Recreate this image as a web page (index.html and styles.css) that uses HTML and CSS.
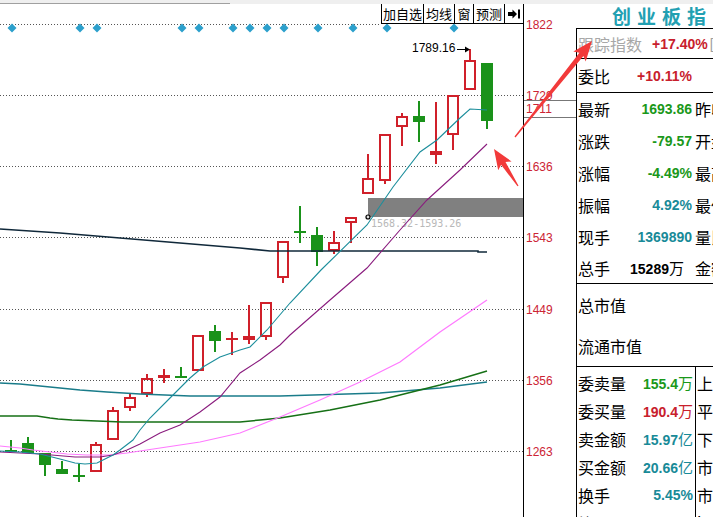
FILE: index.html
```html
<!DOCTYPE html>
<html lang="zh">
<head>
<meta charset="utf-8">
<title>创业板指</title>
<link rel="stylesheet" href="styles.css">
</head>
<body>
<div class="top"><div class="top-tab"></div></div>
<div class="main">
  <div class="chart">
    <svg class="kline" width="576" height="513" viewBox="0 4 576 513">
      <g class="grid">
        <line x1="0" y1="24.5" x2="381" y2="24.5"/>
        <line x1="0" y1="95.5" x2="523" y2="95.5"/>
        <line x1="0" y1="166.5" x2="523" y2="166.5"/>
        <line x1="0" y1="237.5" x2="523" y2="237.5"/>
        <line x1="0" y1="309.5" x2="523" y2="309.5"/>
        <line x1="0" y1="380.5" x2="523" y2="380.5"/>
        <line x1="0" y1="451.5" x2="523" y2="451.5"/>
      </g>
      <g class="dia">
        <polygon points="12,23.5 16.5,28 12,32.5 7.5,28"/>
        <polygon points="80,23.5 84.5,28 80,32.5 75.5,28"/>
        <polygon points="97,23.5 101.5,28 97,32.5 92.5,28"/>
        <polygon points="182,23.5 186.5,28 182,32.5 177.5,28"/>
        <polygon points="199,23.5 203.5,28 199,32.5 194.5,28"/>
        <polygon points="233,23.5 237.5,28 233,32.5 228.5,28"/>
        <polygon points="250,23.5 254.5,28 250,32.5 245.5,28"/>
        <polygon points="267,23.5 271.5,28 267,32.5 262.5,28"/>
        <polygon points="284,23.5 288.5,28 284,32.5 279.5,28"/>
        <polygon points="318,23.5 322.5,28 318,32.5 313.5,28"/>
        <polygon points="353,23.5 357.5,28 353,32.5 348.5,28"/>
        <polygon points="387,23.5 391.5,28 387,32.5 382.5,28"/>
        <polygon points="454,23.5 458.5,28 454,32.5 449.5,28"/>
      </g>
      <rect class="band" x="368" y="198" width="155" height="19"/>
      <text class="bandlbl" x="371" y="227">1568.32-1593.26</text>
      <circle class="dot" cx="368" cy="217" r="2"/>
      <g>
        <line class="gw" x1="487" y1="63" x2="487" y2="129"/><rect class="gb" x="481" y="63" width="12" height="58"/>
        <line class="rw" x1="470" y1="49" x2="470" y2="60"/><rect class="rb" x="465" y="61" width="10" height="28"/>
        <rect class="rb" x="448" y="96" width="10" height="38"/><line class="rw" x1="453" y1="135" x2="453" y2="150"/>
        <line class="rw" x1="436" y1="102" x2="436" y2="151"/><rect class="rb" x="431" y="152" width="10" height="2"/><line class="rw" x1="436" y1="155" x2="436" y2="164"/>
        <line class="gw" x1="419" y1="101" x2="419" y2="142"/><rect class="gb" x="413" y="116" width="12" height="6"/>
        <line class="rw" x1="402" y1="113" x2="402" y2="116"/><rect class="rb" x="397" y="117" width="10" height="9"/><line class="rw" x1="402" y1="127" x2="402" y2="146"/>
        <rect class="rb" x="380" y="135" width="10" height="45"/><line class="rw" x1="385" y1="181" x2="385" y2="184"/>
        <line class="rw" x1="368" y1="154" x2="368" y2="178"/><rect class="rb" x="363" y="179" width="10" height="14"/>
        <rect class="rb" x="346" y="218" width="10" height="4"/><line class="rw" x1="351" y1="223" x2="351" y2="243"/>
        <line class="rw" x1="334" y1="231" x2="334" y2="242"/><rect class="rb" x="329" y="243" width="10" height="7"/><line class="rw" x1="334" y1="251" x2="334" y2="254"/>
        <line class="gw" x1="317" y1="227" x2="317" y2="266"/><rect class="gb" x="311" y="235" width="12" height="17"/>
        <line class="gw" x1="300" y1="206" x2="300" y2="243"/><rect class="gb" x="294" y="231" width="12" height="2"/>
        <rect class="rb" x="278" y="242" width="10" height="35"/><line class="rw" x1="283" y1="278" x2="283" y2="283"/>
        <rect class="rb" x="261" y="303" width="10" height="33"/><line class="rw" x1="266" y1="337" x2="266" y2="340"/>
        <line class="rw" x1="249" y1="305" x2="249" y2="336"/><rect class="rb" x="244" y="337" width="10" height="2"/><line class="rw" x1="249" y1="340" x2="249" y2="344"/>
        <line class="rw" x1="232" y1="332" x2="232" y2="355"/><rect class="rf" x="226" y="338" width="12" height="2"/>
        <line class="gw" x1="215" y1="325" x2="215" y2="352"/><rect class="gb" x="209" y="331" width="12" height="10"/>
        <rect class="rb" x="193" y="336" width="10" height="34"/>
        <line class="gw" x1="181" y1="367" x2="181" y2="378"/><rect class="gb" x="175" y="376" width="12" height="2"/>
        <line class="rw" x1="164" y1="369" x2="164" y2="375"/><rect class="rb" x="159" y="376" width="10" height="1"/><line class="rw" x1="164" y1="378" x2="164" y2="383"/>
        <line class="rw" x1="147" y1="374" x2="147" y2="378"/><rect class="rb" x="142" y="379" width="10" height="14"/><line class="rw" x1="147" y1="394" x2="147" y2="397"/>
        <line class="rw" x1="130" y1="393" x2="130" y2="397"/><rect class="rb" x="125" y="398" width="10" height="9"/><line class="rw" x1="130" y1="408" x2="130" y2="411"/>
        <line class="rw" x1="113" y1="407" x2="113" y2="410"/><rect class="rb" x="108" y="411" width="10" height="28"/>
        <line class="rw" x1="96" y1="442" x2="96" y2="444"/><rect class="rb" x="91" y="445" width="10" height="26"/>
        <line class="gw" x1="79" y1="464" x2="79" y2="482"/><rect class="gb" x="73" y="475" width="12" height="2"/>
        <line class="gw" x1="62" y1="461" x2="62" y2="469"/><rect class="gb" x="56" y="469" width="12" height="5"/>
        <rect class="gb" x="39" y="453" width="12" height="12"/><line class="gw" x1="45" y1="465" x2="45" y2="476"/>
        <line class="gw" x1="28" y1="437" x2="28" y2="443"/><rect class="gb" x="22" y="443" width="12" height="10"/>
        <line class="gw" x1="11" y1="440" x2="11" y2="452"/><rect class="gb" x="5" y="450" width="12" height="2"/>
        <rect class="rb" x="-11" y="450" width="10" height="7"/>
      </g>
      <g class="ma">
        <polyline class="ma-navy" points="0,229 60,233 120,238 180,243 240,248 270,251 478,251 478,252 487,252"/>
        <polyline class="ma-teal2" points="0,383 20,384 40,386 60,388 80,390 107,392 140,394 190,396 280,396 380,393 440,388 487,382"/>
        <polyline class="ma-green" points="0,416 37,416 50,418 58,419 72,420 97,421 122,422 240,422 260,420 280,418 330,410 380,400 440,385 487,371"/>
        <polyline class="ma-pink" points="0,446 20,448 33,450 50,452 67,454 87,455 110,455 127,453 140,451 200,442 240,433 280,417 320,400 360,382 400,362 440,332 487,300"/>
        <polyline class="ma-purple" points="0,452 40,454 75,457 100,457 113,455 127,450 140,444 160,433 180,425 200,412 220,397 240,373 260,360 280,345 290,335 330,300 367,268 400,230 427,200 460,170 487,144"/>
        <polyline class="ma-teal" points="0,451 20,452 40,454 60,459 75,463 85,464 97,463 105,459 113,455 120,450 133,440 140,430 150,418 170,398 190,378 203,367 220,357 240,350 250,347 267,330 290,303 321,270 367,225 393,187 420,152 437,140 460,118 470,109 487,110"/>
      </g>
      <text class="hi" x="412" y="52">1789.16</text>
      <line class="hiarrow" x1="457" y1="49.5" x2="466" y2="49.5"/>
      <polygon class="hihead" points="465,46.5 470,49.5 465,52.5"/>
      <line class="axis" x1="523.5" y1="4" x2="523.5" y2="517"/>
      <line class="axbox" x1="524" y1="100.5" x2="576" y2="100.5"/>
      <line class="axbox" x1="524" y1="117.5" x2="576" y2="117.5"/>
      <g class="ax">
        <text x="526" y="29">1822</text>
        <text x="526" y="100">1729</text>
        <text x="526" y="113">1711</text>
        <text x="526" y="171">1636</text>
        <text x="526" y="242">1543</text>
        <text x="526" y="314">1449</text>
        <text x="526" y="385">1356</text>
        <text x="526" y="456">1263</text>
      </g>
    </svg>
    <div class="toolbar">
      <span class="tb tb-w42">加自选</span>
      <span class="tb tb-w31">均线</span>
      <span class="tb tb-w19">窗</span>
      <span class="tb tb-w31">预测</span>
      <span class="tb tb-w19"><svg width="12" height="10" viewBox="0 0 12 10"><path d="M0 3h4.5V0.5L9 5l-4.5 4.5V7H0z" fill="#000"/><rect x="10" y="0.5" width="2" height="9" fill="#000"/></svg></span>
    </div>
  </div>
  <aside class="panel">
    <div class="ptitle">创业板指 399006</div>
    <div class="box">
      <div class="r1"><span class="lab gray">跟踪指数</span><span class="v red r1v">+17.40%</span><span class="gray2">[3</span></div>
      <div class="r2"><div class="cell"><span class="lab">委比</span><span class="v red">+10.11%</span></div></div>
      <div class="sec1">
        <div class="row"><div class="cell"><span class="lab">最新</span><span class="v green">1693.86</span></div><span class="ext">昨收</span></div>
        <div class="row"><div class="cell"><span class="lab">涨跌</span><span class="v green">-79.57</span></div><span class="ext">开盘</span></div>
        <div class="row"><div class="cell"><span class="lab">涨幅</span><span class="v green">-4.49%</span></div><span class="ext">最高</span></div>
        <div class="row"><div class="cell"><span class="lab">振幅</span><span class="v teal">4.92%</span></div><span class="ext">最低</span></div>
        <div class="row"><div class="cell"><span class="lab">现手</span><span class="v teal">1369890</span></div><span class="ext">量比</span></div>
        <div class="row row-last"><div class="cell"><span class="lab">总手</span><span class="v black pr8">15289<span class="u">万</span></span></div><span class="ext">金额</span></div>
      </div>
      <div class="sec2">
        <div class="mrow">总市值</div>
        <div class="mrow">流通市值</div>
      </div>
      <div class="sec3">
        <div class="lrow lrow-first"><div class="cell2"><span class="lab">委卖量</span><span class="v green">155.4<span class="u">万</span></span></div><span class="ext2">上涨</span></div>
        <div class="lrow"><div class="cell2"><span class="lab">委买量</span><span class="v red">190.4<span class="u">万</span></span></div><span class="ext2">平盘</span></div>
        <div class="lrow"><div class="cell2"><span class="lab">卖金额</span><span class="v teal">15.97<span class="u">亿</span></span></div><span class="ext2">下跌</span></div>
        <div class="lrow"><div class="cell2"><span class="lab">买金额</span><span class="v teal">20.66<span class="u">亿</span></span></div><span class="ext2">市盈</span></div>
        <div class="lrow"><div class="cell2"><span class="lab">换手</span><span class="v teal">5.45%</span></div><span class="ext2">市净</span></div>
        <div class="lrow"><div class="cell2"><span class="lab">均价</span><span class="v teal"></span></div><span class="ext2">'</span></div>
      </div>
    </div>
  </aside>
</div>
<svg class="arrows" width="713" height="517" viewBox="0 0 713 517">
  <polygon points="515.5,137.4 583.4,55.9 585.7,61.6 592,41 573.3,51.6 579.4,52.7 514.5,136.6"/>
  <polygon points="518.5,185.7 505.5,161.9 511.6,161.5 494,149 498.2,170.2 501.1,164.7 517.5,186.3"/>
</svg>
</body>
</html>
```
FILE: styles.css
```css
html, body {
  margin: 0;
  padding: 0;
  background: #fff;
}
body {
  width: 713px;
  height: 517px;
  overflow: hidden;
  position: relative;
  font-family: "Noto Sans CJK SC", "Liberation Sans", sans-serif;
  color: #000;
}
.top {
  height: 4px;
  background: #efefef;
}
.top-tab {
  width: 230px;
  height: 3px;
  border-bottom: 1px solid #a0a0a0;
}
.main {
  display: flex;
  height: 513px;
}
.chart {
  position: relative;
  width: 576px;
  flex: none;
  height: 513px;
}
.kline {
  display: block;
}
.grid line {
  stroke: #555;
  stroke-width: 1;
  stroke-dasharray: 1 2;
}
.dia polygon {
  fill: #2ca0cc;
}
.band {
  fill: #808080;
}
.bandlbl {
  font-family: "DejaVu Sans Mono", "Liberation Mono", monospace;
  font-size: 10px;
  fill: #b8b8b8;
}
.dot {
  fill: #ddd;
  stroke: #000;
  stroke-width: 1.2;
}
.rw {
  stroke: #d0202a;
  stroke-width: 2;
}
.rb {
  fill: none;
  stroke: #d0202a;
  stroke-width: 2;
}
.rf {
  fill: #d0202a;
}
.gw {
  stroke: #1a921a;
  stroke-width: 2;
}
.gb {
  fill: #1a921a;
}
.ma polyline {
  fill: none;
}
.ma-navy { stroke: #10283a; stroke-width: 1.6; }
.ma-teal2 { stroke: #1a7c8a; stroke-width: 1.5; }
.ma-green { stroke: #167016; stroke-width: 1.5; }
.ma-pink { stroke: #ff7aff; stroke-width: 1.2; }
.ma-purple { stroke: #8a1c7e; stroke-width: 1.1; }
.ma-teal { stroke: #1c8e9c; stroke-width: 1.1; }
.hi {
  font-family: "Liberation Sans", sans-serif;
  font-size: 12px;
  fill: #000;
}
.hiarrow {
  stroke: #000;
  stroke-width: 1;
}
.hihead {
  fill: #000;
}
.axis {
  stroke: #000;
  stroke-width: 1;
}
.axbox {
  stroke: #777;
  stroke-width: 1;
}
.ax text {
  font-family: "Liberation Sans", sans-serif;
  font-size: 12px;
  fill: #cc2434;
}
.toolbar {
  position: absolute;
  top: 0;
  left: 381px;
  display: flex;
  height: 20px;
  background: #fff;
}
.tb {
  box-sizing: border-box;
  height: 20px;
  border-left: 1px solid #000;
  border-bottom: 1px solid #000;
  display: flex;
  align-items: center;
  justify-content: center;
  font-size: 13px;
  line-height: 1;
  white-space: nowrap;
  color: #000;
}
.tb-w42 { width: 42px; }
.tb-w31 { width: 31px; }
.tb-w19 { width: 19px; }
.panel {
  width: 137px;
  flex: none;
  overflow: hidden;
}
.ptitle {
  height: 24px;
  line-height: 24px;
  padding-left: 36px;
  font-size: 19px;
  font-weight: bold;
  letter-spacing: 6px;
  color: #22a0b2;
  white-space: nowrap;
}
.box {
  border-left: 1px solid #000;
  border-top: 1px solid #000;
  width: 200px;
}
.lab {
  font-size: 16px;
  line-height: 1;
  white-space: nowrap;
}
.v {
  font-family: "Liberation Sans", sans-serif;
  font-weight: bold;
  font-size: 14px;
  line-height: 1;
  white-space: nowrap;
}
.u {
  font-family: "Noto Sans CJK SC", sans-serif;
  font-weight: normal;
  font-size: 15px;
}
.red { color: #c8202c; }
.green { color: #1a981a; }
.teal { color: #188a98; }
.black { color: #000; }
.gray { color: #a8a8a8; }
.gray2 {
  color: #a0a0a0;
  font-family: "Liberation Sans", sans-serif;
  font-size: 14px;
  margin-left: 2px;
}
.pr8 { padding-right: 8px; }
.r1 {
  height: 29px;
  border-bottom: 1px solid #000;
  display: flex;
  align-items: center;
  padding-left: 1px;
}
.r1v {
  margin-left: 10px;
}
.r2 {
  height: 33px;
  border-bottom: 1px solid #000;
  display: flex;
  align-items: center;
}
.cell {
  width: 115px;
  box-sizing: border-box;
  padding-left: 1px;
  display: flex;
  align-items: center;
  justify-content: space-between;
}
.sec1 {
  border-bottom: 1px solid #000;
}
.row {
  height: 32px;
  display: flex;
  align-items: center;
}
.row-last {
  height: 30px;
}
.ext {
  margin-left: 3px;
  font-size: 16px;
  line-height: 1;
  white-space: nowrap;
}
.sec2 {
  border-bottom: 1px solid #000;
}
.mrow {
  height: 41px;
  display: flex;
  align-items: center;
  padding-left: 1px;
  font-size: 16px;
  line-height: 1;
}
.lrow {
  height: 28px;
  display: flex;
  align-items: stretch;
}
.lrow-first {
  height: 30px;
}
.lrow-first .cell2 {
  padding-top: 2px;
}
.lrow-first .ext2 {
  padding-top: 2px;
}
.cell2 {
  width: 116px;
  box-sizing: border-box;
  padding-left: 1px;
  display: flex;
  align-items: center;
  justify-content: space-between;
}
.ext2 {
  margin-left: 2px;
  border-left: 1px solid #000;
  padding-left: 1px;
  display: flex;
  align-items: center;
  font-size: 16px;
  line-height: 1;
  white-space: nowrap;
}
.arrows {
  position: absolute;
  top: 0;
  left: 0;
  pointer-events: none;
}
.arrows polygon {
  fill: #f23a3a;
}
```
